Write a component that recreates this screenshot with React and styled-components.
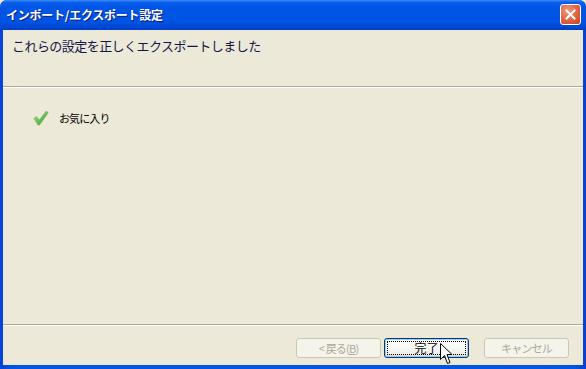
import React from 'react';
import styled, { createGlobalStyle } from 'styled-components';

const Global = createGlobalStyle`
  html, body { margin: 0; padding: 0; background: #ECE9D8; }
  body { width: 586px; height: 369px; overflow: hidden; }
`;

const JP = `Tahoma, "Noto Sans CJK JP", "Noto Sans", sans-serif`;

const Window = styled.div`
  width: 586px;
  height: 369px;
  display: flex;
  flex-direction: column;
  background: linear-gradient(90deg, #0842D8 0%, #0055E5 2%, #0055E5 98%, #0840D0 100%);
  border-radius: 7px 7px 0 0;
  overflow: hidden;
  font-family: ${JP};
`;

const TitleBar = styled.div`
  height: 30px;
  flex: none;
  display: flex;
  align-items: center;
  padding: 0 5px 0 6px;
  background: linear-gradient(180deg, #3D8CF8 0%, #0A5FEF 8%, #0055E5 25%, #0054E3 70%, #0049D6 90%, #003CC0 100%);
`;

const Title = styled.div`
  flex: 1;
  color: #fff;
  font-size: 12px;
  font-weight: bold;
  letter-spacing: -0.25px;
  text-shadow: 1px 1px 0 #0A1A7A;
  padding-bottom: 1px;
`;

const CloseBtn = styled.div`
  width: 21px;
  height: 21px;
  box-sizing: border-box;
  border: 1px solid #fff;
  border-radius: 3px;
  background: radial-gradient(circle at 35% 30%, #F09A7E 0%, #E36B4A 45%, #C5401E 100%);
  display: flex;
  align-items: center;
  justify-content: center;
  margin-top: -1px;
`;

const Body = styled.div`
  flex: 1;
  margin: 0 3px 4px 3px;
  background: #ECE9D8;
  display: flex;
  flex-direction: column;
`;

const Header = styled.div`
  height: 57px;
  flex: none;
  box-sizing: border-box;
  padding: 8px 0 0 9px;
  border-bottom: 1px solid #ACA899;
`;

const HeaderText = styled.div`
  font-size: 13px;
  line-height: 16px;
  color: #14144A;
  letter-spacing: -0.55px;
`;

const Content = styled.div`
  flex: 1;
  border-top: 1px solid #fff;
  padding: 22px 0 0 30px;
`;

const Item = styled.div`
  display: flex;
  align-items: center;
  gap: 10px;
`;

const ItemText = styled.span`
  font-size: 11px;
  line-height: 14px;
  color: #000;
  letter-spacing: -0.9px;
`;

const Footer = styled.div`
  height: 41px;
  flex: none;
  box-sizing: border-box;
  border-top: 1px solid #ACA899;
  box-shadow: inset 0 1px 0 #fff;
  display: flex;
  justify-content: flex-end;
  align-items: flex-start;
  padding: 13px 14px 0 0;
`;

const Button = styled.div`
  position: relative;
  width: 85px;
  height: 20px;
  box-sizing: border-box;
  margin-left: ${p => p.$gap || 0}px;
  border: 1px solid ${p => (p.$disabled ? '#C9C7BA' : '#003C74')};
  border-radius: 3px;
  background: ${p =>
    p.$disabled
      ? '#F5F4EA'
      : 'linear-gradient(180deg, #FFFFFF 0%, #F8F8F4 50%, #ECEBE6 85%, #D6D0C5 100%)'};
  box-shadow: ${p => (p.$focused ? 'inset 0 0 0 1px #A8C8F0' : 'none')};
  color: ${p => (p.$disabled ? '#ACA899' : '#000')};
  font-size: ${p => (p.$focused ? 12 : 11)}px;
  line-height: 18px;
  text-align: center;
  letter-spacing: ${p => (p.$focused ? 0 : -0.8)}px;
  &::after {
    content: '';
    display: ${p => (p.$focused ? 'block' : 'none')};
    position: absolute;
    inset: 2px;
    border: 1px dotted #000;
  }
`;

const Cursor = styled.svg`
  position: absolute;
  left: 55px;
  top: 4px;
  z-index: 2;
`;

const Check = () => (
  <svg width="16" height="16" viewBox="0 0 16 16">
    <defs>
      <linearGradient id="ck" x1="0" y1="0" x2="1" y2="1">
        <stop offset="0" stopColor="#B4E29A" />
        <stop offset="0.6" stopColor="#5DB848" />
        <stop offset="1" stopColor="#3A9A2C" />
      </linearGradient>
    </defs>
    <path
      d="M0.8 8.5 L3.6 6.6 L6.2 10 L13.4 1 L15.2 2.8 L6.6 15 L5 15 Z"
      fill="url(#ck)"
      stroke="#79B06A"
      strokeWidth="0.6"
      strokeLinejoin="round"
    />
  </svg>
);

export default function App() {
  return (
    <>
      <Global />
      <Window>
        <TitleBar>
          <Title>インポート/エクスポート設定</Title>
          <CloseBtn>
            <svg width="11" height="11" viewBox="0 0 11 11">
              <path d="M1.5 1.5 L9.5 9.5 M9.5 1.5 L1.5 9.5" stroke="#fff" strokeWidth="2" strokeLinecap="square" />
            </svg>
          </CloseBtn>
        </TitleBar>
        <Body>
          <Header>
            <HeaderText>これらの設定を正しくエクスポートしました</HeaderText>
          </Header>
          <Content>
            <Item>
              <Check />
              <ItemText>お気に入り</ItemText>
            </Item>
          </Content>
          <Footer>
            <Button $disabled>&lt;&nbsp;戻る(<u>B</u>)</Button>
            <Button $gap={3} $focused>
              完了
              <Cursor width="13" height="22" viewBox="0 0 13 22">
                <path
                  d="M0.5 0.5 L0.5 16.5 L4.5 12.5 L7.5 20.5 L10 19.5 L7 11.5 L12 11.5 Z"
                  fill="#fff"
                  stroke="#000"
                  strokeWidth="1"
                  strokeLinejoin="miter"
                />
              </Cursor>
            </Button>
            <Button $gap={15} $disabled>キャンセル</Button>
          </Footer>
        </Body>
      </Window>
    </>
  );
}
